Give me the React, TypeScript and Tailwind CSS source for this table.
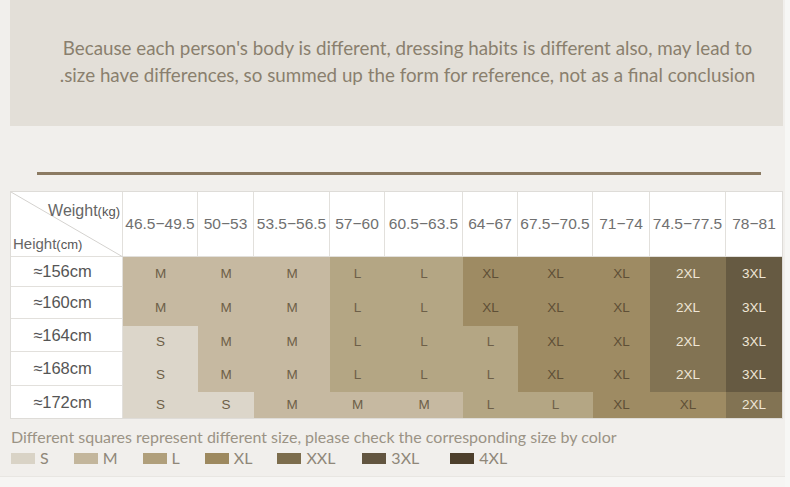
import React from "react";

const cols = ["46.5−49.5", "50−53", "53.5−56.5", "57−60", "60.5−63.5", "64−67", "67.5−70.5", "71−74", "74.5−77.5", "78−81"];
const widths = [75, 56, 76, 55, 78, 55, 75, 57, 76, 56];

const colorMap: Record<string, string> = {
  S: "bg-[#dcd6ca] text-[#6d5f48]",
  M: "bg-[#c6b9a1] text-[#6d5f48]",
  L: "bg-[#b4a684] text-[#6d5f48]",
  XL: "bg-[#9e8b63] text-[#5e4f36]",
  "2XL": "bg-[#827353] text-[#efe6d6]",
  "3XL": "bg-[#665a42] text-[#efe6d6]",
};

const rows = [
  ["M", "M", "M", "L", "L", "XL", "XL", "XL", "2XL", "3XL"],
  ["M", "M", "M", "L", "L", "XL", "XL", "XL", "2XL", "3XL"],
  ["S", "M", "M", "L", "L", "L", "XL", "XL", "2XL", "3XL"],
  ["S", "M", "M", "L", "L", "L", "XL", "XL", "2XL", "3XL"],
  ["S", "S", "M", "M", "M", "L", "L", "XL", "XL", "2XL"],
];
const rowHeights = ["h-[34px]", "h-[35px]", "h-[33px]", "h-[33px]", "h-[26px]"];
const heights = ["≈156cm", "≈160cm", "≈164cm", "≈168cm", "≈172cm"];
const leftHeights = ["h-[30px]", "h-[32px]", "h-[33px]", "h-[34px]", "h-[32px]"];

const legend = [
  { c: "bg-[#d9d3c6]", t: "S", m: "" },
  { c: "bg-[#c3b69c]", t: "M", m: "" },
  { c: "bg-[#b09f7b]", t: "L", m: "" },
  { c: "bg-[#9d895f]", t: "XL", m: "" },
  { c: "bg-[#7c6d4d]", t: "XXL", m: "" },
  { c: "bg-[#625540]", t: "3XL", m: "ml-[2px]" },
  { c: "bg-[#4d3f2c]", t: "4XL", m: "ml-[6px]" },
];

export default function App() {
  return (
    <div className="w-[790px] h-[487px] bg-[#f1efec] overflow-hidden flex" style={{ fontFamily: "Lato, 'Open Sans', sans-serif" }}>
      <div className="w-[785px] flex flex-col">
        <div className="ml-[10px] w-[773px] h-[126px] bg-[#e3dfd8] flex flex-col items-center pt-[34px] pl-[22px] text-[18.8px] leading-[27px] text-[#8a7f6e]">
          <div>Because each person's body is different, dressing habits is different also, may lead to</div>
          <div>.size have differences, so summed up the form for reference, not as a final conclusion</div>
        </div>
        <div className="ml-[37px] mt-[46px] w-[724px] h-[3px] bg-[#8b7a62]" />
        <div className="ml-[10px] mt-[16px] w-[773px] border border-[#dedcd8] bg-white" style={{ fontFamily: "'Liberation Sans', Arial, sans-serif" }}>
          <div className="flex h-[65px] border-b border-[#e2e0dc]">
            <div className="relative w-[112px] border-r border-[#e2e0dc] text-[#666]">
              <svg className="absolute inset-0" width="112" height="65">
                <line x1="0" y1="0" x2="112" y2="65" stroke="#d4d2cf" strokeWidth="1" />
              </svg>
              <div className="absolute right-[2px] top-[7px] text-[16px]">
                Weight<span className="text-[13px] text-[#555]">(kg)</span>
              </div>
              <div className="absolute left-[2px] top-[41px] text-[15px]">
                Height<span className="text-[13px] text-[#555]">(cm)</span>
              </div>
            </div>
            {cols.map((c, i) => (
              <div
                key={c}
                className={`flex items-center justify-center text-[15.5px] text-[#707070] ${i < cols.length - 1 ? "border-r border-[#e2e0dc]" : ""}`}
                style={{ width: widths[i] }}
              >
                {c}
              </div>
            ))}
          </div>
          <div className="flex">
            <div className="w-[112px] flex flex-col border-r border-[#e2e0dc]">
              {heights.map((h, i) => (
                <div
                  key={h}
                  className={`${leftHeights[i]} flex items-center justify-center pr-[8px] text-[16.5px] text-[#555] ${i < 4 ? "border-b border-[#e2e0dc]" : ""}`}
                >
                  {h}
                </div>
              ))}
            </div>
            <div className="flex flex-col">
              {rows.map((r, ri) => (
                <div key={ri} className={`flex ${rowHeights[ri]}`}>
                  {r.map((s, ci) => (
                    <div
                      key={ci}
                      className={`flex items-center justify-center text-[13.5px] ${colorMap[s]}`}
                      style={{ width: widths[ci] }}
                    >
                      {s}
                    </div>
                  ))}
                </div>
              ))}
            </div>
          </div>
        </div>
        <div className="ml-[11px] mt-[8px] text-[16px] leading-[20px] text-[#9b9385]">
          Different squares represent different size, please check the corresponding size by color
        </div>
        <div className="ml-[11px] mt-[1px] flex items-center gap-[25px] text-[16px] leading-[20px] text-[#8f8779]">
          {legend.map((l) => (
            <div key={l.t} className={`flex items-center gap-[5px] ${l.m}`}>
              <div className={`w-[24px] h-[11px] ${l.c}`} />
              <span>{l.t}</span>
            </div>
          ))}
        </div>
        <div className="mt-[8px] h-[1px] bg-[#e8e6e2]" />
        <div className="flex-1 bg-[#f6f5f3]" />
      </div>
      <div className="w-[5px] bg-[#f7f7f5]" />
    </div>
  );
}
